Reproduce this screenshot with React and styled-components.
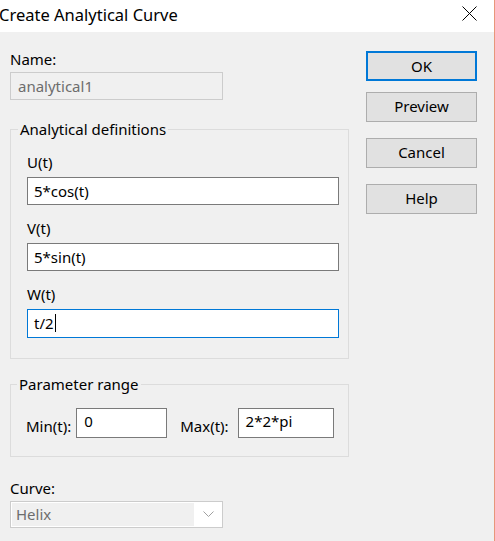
import React from "react";
import styled, { createGlobalStyle } from "styled-components";

const GlobalStyle = createGlobalStyle`
  html, body {
    margin: 0;
    padding: 0;
    background: #ffffff;
  }
  body {
    font-family: "Noto Sans", "Segoe UI", "Liberation Sans", sans-serif;
    color: #000000;
  }
`;

const Window = styled.div`
  width: 495px;
  height: 541px;
  box-sizing: border-box;
  border-right: 1px solid #e9967a;
  background-color: #f0f0f0;
  display: flex;
  flex-direction: column;
  overflow: hidden;
`;

const TitleBar = styled.div`
  height: 32px;
  flex-shrink: 0;
  background-color: #ffffff;
  display: flex;
  align-items: flex-start;
  justify-content: space-between;
  padding-top: 4px;
  box-sizing: border-box;
`;

const Title = styled.div`
  margin-left: -1px;
  font-size: 16.5px;
  line-height: 22px;
  white-space: nowrap;
`;

const CloseButton = styled.div`
  width: 15px;
  height: 15px;
  margin-top: 2px;
  margin-right: 17px;
  display: flex;
`;

const Body = styled.div`
  display: flex;
  padding-left: 10px;
  gap: 17px;
`;

const LeftColumn = styled.div`
  width: 339px;
  padding-top: 17px;
  display: flex;
  flex-direction: column;
`;

const RightColumn = styled.div`
  width: 111px;
  padding-top: 19px;
  display: flex;
  flex-direction: column;
  gap: 16px;
`;

const Label = styled.div`
  font-size: 15px;
  line-height: 20px;
  margin-top: ${(p) => p.$top ?? 0}px;
  margin-bottom: ${(p) => p.$gap ?? 3}px;
  white-space: nowrap;
`;

const TextBox = styled.div`
  box-sizing: border-box;
  width: ${(p) => p.$width}px;
  height: ${(p) => p.$height ?? 28}px;
  border: 1px solid
    ${(p) => (p.$focused ? "#0078d7" : p.$disabled ? "#cccccc" : "#7a7a7a")};
  background-color: ${(p) => (p.$disabled ? "#f0f0f0" : "#ffffff")};
  color: ${(p) => (p.$disabled ? "#6d6d6d" : "#000000")};
  font-size: 15px;
  line-height: ${(p) => (p.$height ?? 28) - 2 - (p.$lift ?? 0)}px;
  padding-left: ${(p) => p.$pad ?? 6}px;
  white-space: nowrap;
  display: flex;
  align-items: flex-start;
  flex-shrink: 0;
`;

const Caret = styled.span`
  display: inline-block;
  width: 1px;
  height: 18px;
  margin-top: 4px;
  margin-left: 1px;
  background-color: #000000;
`;

const Group = styled.fieldset`
  margin: ${(p) => p.$top}px 0 0 0;
  padding: 0;
  min-width: 0;
  border: 1px solid #dcdcdc;
  box-sizing: border-box;
  width: 339px;
`;

const Legend = styled.legend`
  font-size: 15px;
  line-height: 20px;
  padding: 0 2px;
  margin-left: ${(p) => p.$indent}px;
`;

const GroupContent = styled.div`
  padding: ${(p) => p.$padding};
  display: flex;
  flex-direction: ${(p) => (p.$row ? "row" : "column")};
  align-items: flex-start;
`;

const FieldGap = styled.div`
  height: 13px;
  flex-shrink: 0;
`;

const RangeLabel = styled.div`
  font-size: 15px;
  line-height: 20px;
  margin-top: 8px;
  margin-left: ${(p) => p.$left ?? 0}px;
  margin-right: ${(p) => p.$right}px;
  white-space: nowrap;
`;

const Select = styled.div`
  box-sizing: border-box;
  width: 213px;
  height: 27px;
  border: 1px solid #cccccc;
  background-color: #ffffff;
  padding: 1px;
  display: flex;
  align-items: stretch;
`;

const SelectValue = styled.div`
  width: 182px;
  background-color: #f0f0f0;
  color: #6d6d6d;
  font-size: 15px;
  line-height: 22px;
  padding-left: 4px;
  box-sizing: border-box;
`;

const SelectArrow = styled.div`
  flex: 1;
  display: flex;
  align-items: center;
  justify-content: center;
  padding-left: 1px;
`;

const Button = styled.div`
  box-sizing: border-box;
  height: 30px;
  border: ${(p) => (p.$primary ? "2px solid #0078d7" : "1px solid #adadad")};
  background-color: #e1e1e1;
  font-size: 15px;
  line-height: ${(p) => (p.$primary ? 26 : 27)}px;
  text-align: center;
  margin-bottom: ${(p) => (p.$primary ? -5 : 0)}px;
`;

export default function App() {
  return (
    <>
      <GlobalStyle />
      <Window>
        <TitleBar>
          <Title>Create Analytical Curve</Title>
          <CloseButton>
            <svg width="15" height="15" viewBox="0 0 15 15">
              <path
                d="M0.5 0.5 L14.5 14.5 M14.5 0.5 L0.5 14.5"
                stroke="#000000"
                strokeWidth="1"
                fill="none"
              />
            </svg>
          </CloseButton>
        </TitleBar>
        <Body>
          <LeftColumn>
            <Label>Name:</Label>
            <TextBox $width={213} $disabled $pad={7}>
              analytical1
            </TextBox>

            <Group $top={19}>
              <Legend $indent={7}>Analytical definitions</Legend>
              <GroupContent $padding="13px 9px 20px 16px">
                <Label $gap={5}>U(t)</Label>
                <TextBox $width={312}>5*cos(t)</TextBox>
                <FieldGap />
                <Label $gap={5}>V(t)</Label>
                <TextBox $width={312}>5*sin(t)</TextBox>
                <FieldGap />
                <Label $gap={5}>W(t)</Label>
                <TextBox $width={312} $height={29} $focused>
                  t/2
                  <Caret />
                </TextBox>
              </GroupContent>
            </Group>

            <Group $top={15}>
              <Legend $indent={6}>Parameter range</Legend>
              <GroupContent $row $padding="14px 0 18px 15px">
                <RangeLabel $right={5}>Min(t):</RangeLabel>
                <TextBox $width={91} $height={30} $lift={3} $pad={7}>
                  0
                </TextBox>
                <RangeLabel $left={13} $right={9}>
                  Max(t):
                </RangeLabel>
                <TextBox $width={96} $height={30} $lift={3} $pad={7}>
                  2*2*pi
                </TextBox>
              </GroupContent>
            </Group>

            <Label $top={21}>Curve:</Label>
            <Select>
              <SelectValue>Helix</SelectValue>
              <SelectArrow>
                <svg width="11" height="7" viewBox="0 0 11 7">
                  <path
                    d="M0.5 0.5 L5.5 5.5 L10.5 0.5"
                    stroke="#a0a0a0"
                    strokeWidth="1"
                    fill="none"
                  />
                </svg>
              </SelectArrow>
            </Select>
          </LeftColumn>

          <RightColumn>
            <Button $primary>OK</Button>
            <Button>Preview</Button>
            <Button>Cancel</Button>
            <Button>Help</Button>
          </RightColumn>
        </Body>
      </Window>
    </>
  );
}
